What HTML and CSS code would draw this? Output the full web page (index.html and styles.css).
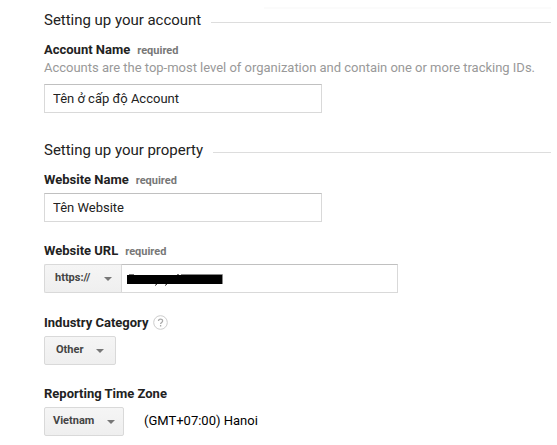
FILE: index.html
```
<!DOCTYPE html>
<html lang="vi">
<head>
  <meta charset="UTF-8" />
  <meta name="viewport" content="width=device-width, initial-scale=1.0" />
  <title>New Account</title>
  <link rel="stylesheet" href="styles.css">
</head>
<body>
  <div class="top-edge"></div>
  <form class="form">
    <h2 class="section-title">Setting up your account</h2>

    <div class="field account-field">
      <div class="label">Account Name <span class="required">required</span></div>
      <p class="hint">Accounts are the top-most level of organization and contain one or more tracking IDs.</p>
      <input class="text-input" type="text" value="Tên ở cấp độ Account">
    </div>

    <h2 class="section-title">Setting up your property</h2>

    <div class="field">
      <div class="label">Website Name <span class="required">required</span></div>
      <input class="text-input" type="text" value="Tên Website">
    </div>

    <div class="field url-field">
      <div class="label">Website URL <span class="required">required</span></div>
      <div class="url-row">
        <button class="select protocol" type="button">https://<span class="arrow"></span></button>
        <div class="url-input">
          <svg class="redacted" width="97" height="14" viewBox="0 0 97 14">
            <path d="M2 1.5h5M50 1.5h2" stroke="#777" />
            <path d="M30 11l-2 1.5M40 11l-2 1.5" stroke="#333" />
            <path d="M0 2h95v9H0z" fill="#000" />
            <path d="M54 1.5h41.5V11" fill="none" stroke="#888" />
          </svg>
        </div>
      </div>
    </div>

    <div class="field">
      <div class="label">Industry Category
        <svg class="help" width="15" height="15" viewBox="0 0 15 15">
          <circle cx="7.5" cy="7.5" r="6.8" fill="#fff" stroke="#ccc" />
          <path d="M5.5 6.1c0-2.6 4.1-2.6 4.1-.2 0 1.5-2 1.6-2 3.2M7.6 10.1v1.3" fill="none" stroke="#aaa" stroke-width="1.3" />
        </svg>
      </div>
      <button class="select category" type="button">Other<span class="arrow"></span></button>
    </div>

    <div class="field">
      <div class="label">Reporting Time Zone</div>
      <div class="zone-row">
        <button class="select country" type="button">Vietnam<span class="arrow"></span></button>
        <span class="zone">(GMT+07:00) Hanoi</span>
      </div>
    </div>
  </form>
</body>
</html>
```
FILE: styles.css
```
* {
  box-sizing: border-box;
}

body {
  margin: 0;
  background: #fff;
  color: #222;
  font-family: Roboto, "Liberation Sans", sans-serif;
  font-size: 13px;
  overflow: hidden;
}

.top-edge {
  height: 2px;
  margin: 7px 6px 0 264px;
  background: #fbfbfb;
}

.form {
  padding: 1px 6px 0 44px;
}

.section-title {
  display: flex;
  align-items: center;
  height: 20px;
  margin: 0 0 10px;
  font-size: 15px;
  font-weight: 400;
  letter-spacing: -0.02px;
  line-height: 20px;
  white-space: nowrap;
}

.section-title::after {
  content: "";
  flex: 1;
  height: 1px;
  margin: 5px 0 0 10px;
  background: #ddd;
}

.field {
  margin-bottom: 19px;
}

.account-field {
  margin-bottom: 27px;
}

.url-field {
  margin-bottom: 20px;
}

.label {
  display: flex;
  align-items: center;
  height: 18px;
  margin-bottom: 5px;
  font-weight: 700;
  white-space: nowrap;
}

.account-field .label {
  margin-bottom: 2px;
}

.required {
  margin: 3px 0 0 7px;
  color: #777;
  font-size: 11px;
}

.hint {
  margin: 0 0 8px;
  color: #999;
  letter-spacing: -0.015px;
  line-height: 16px;
  white-space: nowrap;
}

.text-input,
.url-input {
  display: block;
  width: 278px;
  height: 29px;
  padding: 0 8px;
  border: 1px solid #d9d9d9;
  border-top-color: #c0c0c0;
  background: #fff;
  color: #222;
  font: inherit;
}

.url-row,
.zone-row {
  display: flex;
  align-items: center;
}

.url-input {
  width: 277px;
  padding: 8px 5px;
}

.redacted,
.help {
  display: block;
}

.help {
  margin: 1px 0 0 5px;
}

.select {
  display: flex;
  align-items: center;
  justify-content: space-between;
  height: 29px;
  padding: 0 11px 2px;
  border: 1px solid #d9d9d9;
  border-radius: 2px;
  background: linear-gradient(#f5f5f5, #efefef);
  color: #444;
  font: 700 11px Roboto, "Liberation Sans", sans-serif;
}

.protocol {
  width: 77px;
  padding: 0 9px 2px 10px;
  border-right: 0;
  border-radius: 2px 0 0 2px;
}

.category {
  width: 72px;
}

.country {
  width: 80px;
  padding: 0 8px 2px;
}

.arrow {
  margin-top: 3px;
  border: 4px solid transparent;
  border-top-color: #777;
  border-bottom: 0;
}

.zone {
  margin: 0 0 2px 20px;
  color: #000;
}
```
